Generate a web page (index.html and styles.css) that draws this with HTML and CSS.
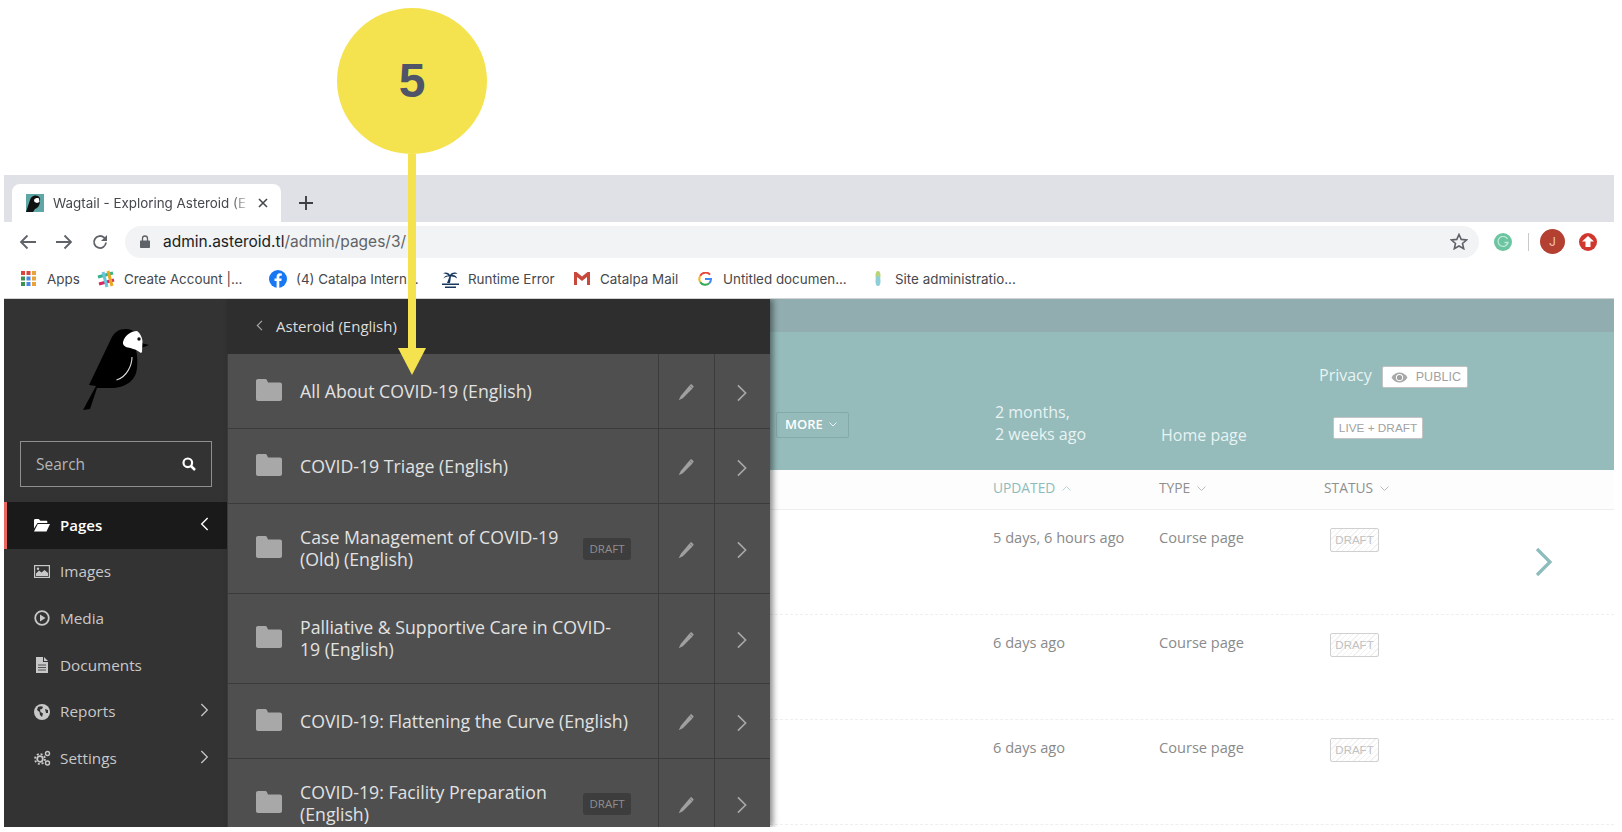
FILE: index.html
```html
<!DOCTYPE html>
<html lang="en">
<head>
  <meta charset="UTF-8" />
  <title>Wagtail - Exploring Asteroid</title>
  <link rel="stylesheet" href="styles.css">
</head>
<body>

  <svg class="defs" width="0" height="0">
    <symbol id="folder" viewBox="0 0 26 22">
      <path d="M2 0h7c1 0 1.600.5 2 1.200L12 3.500h12c1.100 0 2 .9 2 2V20c0 1.100-.9 2-2 2H2c-1.100 0-2-.9-2-2V2C0 .9.900 0 2 0z"/>
    </symbol>
    <symbol id="pencil" viewBox="0 0 16 17">
      <path d="M11.500 1.500l3 3L4.800 14.200.7 16.300l2-4.300z"/>
      <path d="M12.300.7c.5-.5 1.100-.5 1.500-.1l1.500 1.500c.4.400.4 1-.1 1.500l-.6.600-3-3z"/>
    </symbol>
    <symbol id="chev" viewBox="0 0 12 20">
      <path d="M1.500 1.500L10 10l-8.500 8.500" fill="none" stroke="currentColor" stroke-width="1.800"/>
    </symbol>
    <symbol id="chev-left" viewBox="0 0 12 20">
      <path d="M10.500 1.500L2 10l8.500 8.500" fill="none" stroke="currentColor" stroke-width="2"/>
    </symbol>
  </svg>

  <div class="callout">
    <div class="callout-dot">5</div>
    <div class="callout-line"></div>
    <div class="callout-tip"></div>
  </div>

  <div class="shot">

    <div class="tabstrip">
      <div class="tab">
        <svg class="favicon" width="18" height="18" viewBox="0 0 18 18">
          <rect width="18" height="18" fill="#5fa6a6"/>
          <path d="M0 18L4 6c1-4 5-5.500 8-4 2 1 2.500 3 2 5 0 4-2 7-5 8l-2 3z" fill="#111"/>
          <path d="M8 6c1-2 3.500-2.500 5-1.500L13.500 8 11 9 8.500 8z" fill="#fff"/>
        </svg>
        <span class="tab-title">Wagtail - Exploring Asteroid (E</span>
        <svg class="tab-close" width="10" height="10" viewBox="0 0 10 10"><path d="M1 1l8 8M9 1l-8 8" stroke="#45484d" stroke-width="1.600"/></svg>
      </div>
      <svg class="tab-new" width="14" height="14" viewBox="0 0 14 14"><path d="M7 0v14M0 7h14" stroke="#3c4043" stroke-width="1.900"/></svg>
    </div>

    <div class="toolbar">
      <svg class="nav-btn" width="18" height="16" viewBox="0 0 18 16"><path d="M17 8H2M8.500 1.500L2 8l6.500 6.500" fill="none" stroke="#5f6368" stroke-width="1.800"/></svg>
      <svg class="nav-btn" width="18" height="16" viewBox="0 0 18 16"><path d="M1 8h15M9.500 1.500L16 8l-6.500 6.500" fill="none" stroke="#5f6368" stroke-width="1.800"/></svg>
      <svg class="nav-btn" width="18" height="18" viewBox="0 0 18 18"><path d="M15 9.500a6 6 0 1 1-1.800-4.800L15 6.500" fill="none" stroke="#5f6368" stroke-width="1.800"/><path d="M16 2v6h-6z" fill="#5f6368"/></svg>
      <div class="omnibox">
        <svg width="10" height="13" viewBox="0 0 10 13"><path d="M1 5.500h8c.6 0 1 .4 1 1V12c0 .6-.4 1-1 1H1c-.6 0-1-.4-1-1V6.500c0-.6.400-1 1-1z" fill="#5f6368"/><path d="M2.500 6V3.500a2.500 2.500 0 0 1 5 0V6" fill="none" stroke="#5f6368" stroke-width="1.300"/></svg>
        <span class="url"><b>admin.asteroid.tl</b>/admin/pages/3/</span>
        <svg class="star" width="18" height="17" viewBox="0 0 18 17"><path d="M9 1.500l2.200 4.900 5.300.6-4 3.500 1.200 5.200L9 13l-4.700 2.700 1.200-5.200-4-3.500 5.300-.6z" fill="none" stroke="#5f6368" stroke-width="1.600"/></svg>
      </div>
      <div class="ext-grammarly">
        <svg width="12" height="12" viewBox="0 0 12 12"><path d="M10.500 3A5 5 0 1 0 11 6.500H7.500" fill="none" stroke="#bfe9d9" stroke-width="1.300"/></svg>
      </div>
      <div class="ext-sep"></div>
      <div class="avatar">J</div>
      <div class="ext-up">
        <svg width="12" height="11" viewBox="0 0 12 11"><path d="M6 0l6 5.500H8.500V11h-5V5.500H0z" fill="#fff"/></svg>
      </div>
    </div>

    <div class="bookmarks">
      <div class="bm bm-apps">
        <svg width="15" height="15" viewBox="0 0 15 15">
          <rect width="4" height="4" fill="#d9453a"/><rect x="5.500" width="4" height="4" fill="#d9453a"/><rect x="11" width="4" height="4" fill="#e9a33b"/>
          <rect y="5.500" width="4" height="4" fill="#3f8f4d"/><rect x="5.500" y="5.500" width="4" height="4" fill="#4a85e8"/><rect x="11" y="5.500" width="4" height="4" fill="#e9a33b"/>
          <rect y="11" width="4" height="4" fill="#3f8f4d"/><rect x="5.500" y="11" width="4" height="4" fill="#4a85e8"/><rect x="11" y="11" width="4" height="4" fill="#e9a33b"/>
        </svg>
        <span>Apps</span>
      </div>
      <div class="bm bm-slack">
        <svg width="18" height="18" viewBox="0 0 18 18">
          <path d="M1 7l15-4" stroke="#36b38a" stroke-width="3"/><path d="M2 14l15-4" stroke="#d8285f" stroke-width="3"/>
          <path d="M6 2l4 15" stroke="#6ac4dd" stroke-width="3"/><path d="M11 1l4 15" stroke="#e9a820" stroke-width="3"/>
        </svg>
        <span>Create Account |...</span>
      </div>
      <div class="bm bm-fb">
        <svg width="18" height="18" viewBox="0 0 18 18"><circle cx="9" cy="9" r="9" fill="#1877f2"/><path d="M7.600 18v-7H5.500V8.400h2.100V6.700c0-2.200 1.300-3.400 3.300-3.400l1.900.2v2.200h-1.100c-1 0-1.400.7-1.400 1.300v1.400h2.400l-.4 2.600h-2v7z" fill="#fff"/></svg>
        <span>(4) Catalpa Intern...</span>
      </div>
      <div class="bm bm-island">
        <svg width="19" height="18" viewBox="0 0 19 18"><path d="M9 5C7 2 4 2 2 3.500 4 3.500 6 4 7.500 5.500 5 5 3 6.500 2.500 8.500 4.500 6.800 6.500 6.300 8.500 6.500L6 13h3l1-6.500c2-.2 4.500.5 6 2-.3-2.500-2.500-4-5-3.500 1.500-1 3.500-1.500 5.500-1C15 2 11 2 9 5z" fill="#17375e"/><path d="M1 13.500h17v1.500H1zM4 16.500h11V18H4z" fill="#17375e"/></svg>
        <span>Runtime Error</span>
      </div>
      <div class="bm bm-gmail">
        <svg width="16" height="13" viewBox="0 0 16 13"><path d="M0 0h2.500L8 4.500 13.500 0H16v13h-3V5L8 9 3 5v8H0z" fill="#c8493b"/></svg>
        <span>Catalpa Mail</span>
      </div>
      <div class="bm bm-google">
        <svg width="14" height="14" viewBox="0 0 14 14">
          <path d="M12 2.600A6 6 0 0 0 2.200 3.900" fill="none" stroke="#e6483a" stroke-width="2"/>
          <path d="M2.200 3.900a6 6 0 0 0 0 6.200" fill="none" stroke="#f4b81f" stroke-width="2"/>
          <path d="M2.200 10.100a6 6 0 0 0 9.200 1" fill="none" stroke="#33a853" stroke-width="2"/>
          <path d="M11.400 11.100A6 6 0 0 0 13 7H7" fill="none" stroke="#4285f4" stroke-width="2"/>
        </svg>
        <span>Untitled documen...</span>
      </div>
      <div class="bm bm-site">
        <svg width="6" height="15" viewBox="0 0 6 15"><ellipse cx="3" cy="4.500" rx="2.500" ry="4.500" fill="#b8d47a"/><ellipse cx="3" cy="10" rx="2.500" ry="5" fill="#8ccfd8"/></svg>
        <span>Site administratio...</span>
      </div>
    </div>

    <div class="app">

      <aside class="sidebar">
        <svg class="bird" width="90" height="100" viewBox="0 0 90 100">
          <path d="M79 25l-8-2c-2-8-7-14-15-14-7 0-12 3-15 10L19 65l7 1-13 24 7-1 7-21h14c14 0 25-7 26-20 .5-7 .5-12-1-18z" fill="#000"/>
          <path d="M53 22c2-7 8-11 14-11 3 2 5 6 5.500 10l-.5 11-1 1c-5-4-11-5-15-6-2-1-3.500-3-3-5z" fill="#fff"/>
          <circle cx="69" cy="19" r="1.700" fill="#111"/>
          <path d="M62 37c0 8-5 20-15.500 23" fill="none" stroke="#ddd" stroke-width="1.100"/>
        </svg>
        <div class="search">
          <span>Search</span>
          <svg width="14" height="14" viewBox="0 0 14 14"><circle cx="5.800" cy="5.800" r="4.300" fill="none" stroke="#fff" stroke-width="2.200"/><path d="M9 9l4 4" stroke="#fff" stroke-width="2.500"/></svg>
        </div>
        <nav>
          <a class="nav-item active">
            <svg class="nav-icon" width="16" height="13" viewBox="0 0 16 13"><path d="M0 1.500C0 .7.500 0 1.300 0h3.500l1.500 1.800h6c.6 0 1 .4 1 1V4H3.500L0 9.500z" fill="#fff"/><path d="M3.800 5H16l-3.500 7.500H0z" fill="#fff"/></svg>
            <span>Pages</span>
            <svg class="nav-chev" width="9" height="14"><use href="#chev-left"/></svg>
          </a>
          <a class="nav-item">
            <svg class="nav-icon" width="16" height="13" viewBox="0 0 16 13"><rect x=".6" y=".6" width="14.800" height="11.800" fill="none" stroke="#c8c8c8" stroke-width="1.200"/><path d="M2 11V8.500l3-3 2.500 2 3-2.500L14 8v3z" fill="#c8c8c8"/><circle cx="4" cy="3.700" r="1.200" fill="#c8c8c8"/></svg>
            <span>Images</span>
          </a>
          <a class="nav-item">
            <svg class="nav-icon" width="16" height="16" viewBox="0 0 16 16"><circle cx="8" cy="8" r="6.800" fill="none" stroke="#c8c8c8" stroke-width="1.800"/><path d="M6 4.500L11.500 8 6 11.500z" fill="#c8c8c8"/></svg>
            <span>Media</span>
          </a>
          <a class="nav-item">
            <svg class="nav-icon" width="16" height="16" viewBox="0 0 16 16"><path d="M2 0h7v5h5v11H2zM10 0l4 4h-4z" fill="#c8c8c8"/><path d="M4 8h8M4 10.500h8M4 13h8" stroke="#333" stroke-width=".8"/></svg>
            <span>Documents</span>
          </a>
          <a class="nav-item">
            <svg class="nav-icon" width="16" height="16" viewBox="0 0 16 16"><circle cx="8" cy="8" r="8" fill="#c8c8c8"/><path d="M4 3c2-1 4-1 5 0L8 5 6 5.500 6.500 8 9 9.500 8 13 6 11 5.500 8 3 6z" fill="#333"/><path d="M11 5l3 1v3l-2 0z" fill="#333"/></svg>
            <span>Reports</span>
            <svg class="nav-chev" width="9" height="14"><use href="#chev"/></svg>
          </a>
          <a class="nav-item">
            <svg class="nav-icon" width="17" height="16" viewBox="0 0 17 16"><circle cx="6" cy="9" r="2.800" fill="none" stroke="#c8c8c8" stroke-width="1.800"/><circle cx="6" cy="9" r="5" fill="none" stroke="#c8c8c8" stroke-width="1.700" stroke-dasharray="2 1.930"/><circle cx="13.500" cy="3.500" r="2" fill="none" stroke="#c8c8c8" stroke-width="1.400"/><circle cx="13.500" cy="13" r="2" fill="none" stroke="#c8c8c8" stroke-width="1.400"/></svg>
            <span>Settings</span>
            <svg class="nav-chev" width="9" height="14"><use href="#chev"/></svg>
          </a>
        </nav>
      </aside>

      <section class="explorer">
        <div class="explorer-head">
          <svg width="7" height="11"><use href="#chev-left"/></svg>
          <span>Asteroid (English)</span>
        </div>
        <div class="ex-row">
          <div class="ex-title"><svg class="folder"><use href="#folder"/></svg><span class="ex-name">All About COVID-19 (English)</span></div>
          <div class="ex-btn"><svg class="pencil"><use href="#pencil"/></svg></div>
          <div class="ex-btn"><svg class="ex-chev"><use href="#chev"/></svg></div>
        </div>
        <div class="ex-row">
          <div class="ex-title"><svg class="folder"><use href="#folder"/></svg><span class="ex-name">COVID-19 Triage (English)</span></div>
          <div class="ex-btn"><svg class="pencil"><use href="#pencil"/></svg></div>
          <div class="ex-btn"><svg class="ex-chev"><use href="#chev"/></svg></div>
        </div>
        <div class="ex-row ex-row-tall">
          <div class="ex-title"><svg class="folder"><use href="#folder"/></svg><span class="ex-name">Case Management of COVID-19<br>(Old) (English)</span><span class="ex-draft">DRAFT</span></div>
          <div class="ex-btn"><svg class="pencil"><use href="#pencil"/></svg></div>
          <div class="ex-btn"><svg class="ex-chev"><use href="#chev"/></svg></div>
        </div>
        <div class="ex-row ex-row-tall">
          <div class="ex-title"><svg class="folder"><use href="#folder"/></svg><span class="ex-name">Palliative &amp; Supportive Care in COVID-<br>19 (English)</span></div>
          <div class="ex-btn"><svg class="pencil"><use href="#pencil"/></svg></div>
          <div class="ex-btn"><svg class="ex-chev"><use href="#chev"/></svg></div>
        </div>
        <div class="ex-row">
          <div class="ex-title"><svg class="folder"><use href="#folder"/></svg><span class="ex-name">COVID-19: Flattening the Curve (English)</span></div>
          <div class="ex-btn"><svg class="pencil"><use href="#pencil"/></svg></div>
          <div class="ex-btn"><svg class="ex-chev"><use href="#chev"/></svg></div>
        </div>
        <div class="ex-row ex-row-tall">
          <div class="ex-title"><svg class="folder"><use href="#folder"/></svg><span class="ex-name">COVID-19: Facility Preparation<br>(English)</span><span class="ex-draft">DRAFT</span></div>
          <div class="ex-btn"><svg class="pencil"><use href="#pencil"/></svg></div>
          <div class="ex-btn"><svg class="ex-chev"><use href="#chev"/></svg></div>
        </div>
      </section>

      <main class="content">
        <div class="topbar"></div>
        <div class="page-head">
          <div class="privacy">
            <span class="privacy-label">Privacy</span>
            <span class="tag tag-public">
              <svg width="17" height="11" viewBox="0 0 17 11"><path d="M.5 5.500C2.500 2 5.300.5 8.500.5s6 1.500 8 5c-2 3.500-4.800 5-8 5s-6-1.500-8-5z" fill="#a9a9a9"/><circle cx="8.500" cy="5.500" r="3.600" fill="#fff"/><circle cx="8.500" cy="5.500" r="2.600" fill="#a0a0a0"/></svg>
              PUBLIC
            </span>
          </div>
          <div class="summary">
            <div class="more">MORE <svg width="8" height="5" viewBox="0 0 8 5"><path d="M.5.500L4 4 7.500.5" fill="none" stroke="#e8f2f2" stroke-width="1"/></svg></div>
            <div class="sum-date">2 months,<br>2 weeks ago</div>
            <div class="sum-type">Home page</div>
            <div class="tag tag-live">LIVE + DRAFT</div>
          </div>
        </div>
        <div class="col-head">
          <span class="col col-on">UPDATED <svg width="9" height="5" viewBox="0 0 9 5"><path d="M.5 4.500L4.500.5l4 4" fill="none" stroke="#b5d5d5"/></svg></span>
          <span class="col">TYPE <svg width="9" height="5" viewBox="0 0 9 5"><path d="M.5.500l4 4 4-4" fill="none" stroke="#bbb"/></svg></span>
          <span class="col">STATUS <svg width="9" height="5" viewBox="0 0 9 5"><path d="M.5.500l4 4 4-4" fill="none" stroke="#bbb"/></svg></span>
        </div>
        <div class="row">
          <span>5 days, 6 hours ago</span>
          <span>Course page</span>
          <span class="row-draft">DRAFT</span>
          <svg class="row-chev" width="18" height="30" viewBox="0 0 18 30"><path d="M2 2l13 13L2 28" fill="none" stroke="#8dbcbc" stroke-width="3.200"/></svg>
        </div>
        <div class="row">
          <span>6 days ago</span>
          <span>Course page</span>
          <span class="row-draft">DRAFT</span>
        </div>
        <div class="row">
          <span>6 days ago</span>
          <span>Course page</span>
          <span class="row-draft">DRAFT</span>
        </div>
      </main>

    </div>
  </div>

</body>
</html>
```

FILE: styles.css
```css
* {
  box-sizing: border-box;
}

html,
body {
  margin: 0;
  height: 832px;
  overflow: hidden;
  background: white;
}

body {
  font-family: "Open Sans", sans-serif;
  position: relative;
}

.defs {
  position: absolute;
}

/* yellow callout */
.callout {
  position: absolute;
  left: 337px;
  top: 8px;
  width: 150px;
  z-index: 5;
}

.callout-dot {
  width: 150px;
  height: 146px;
  border-radius: 50%;
  background: #f5e24f;
  color: #4f5468;
  font-family: "Liberation Sans", Arial, sans-serif;
  font-weight: bold;
  font-size: 48px;
  line-height: 146px;
  text-align: center;
}

.callout-line {
  width: 8px;
  height: 194px;
  margin-left: 71px;
  background: #f5e24f;
}

.callout-tip {
  width: 0;
  height: 0;
  margin-left: 61px;
  border-left: 14px solid transparent;
  border-right: 14px solid transparent;
  border-top: 27px solid #f5e24f;
}

/* browser */
.shot {
  margin: 175px 8px 0 4px;
  font-family: Inter, sans-serif;
}

.tabstrip {
  height: 47px;
  background: #dfe1e6;
  display: flex;
  align-items: flex-end;
  padding-left: 8px;
}

.tab {
  width: 269px;
  height: 38px;
  background: white;
  border-radius: 8px 8px 0 0;
  display: flex;
  align-items: center;
  padding-left: 14px;
  font-size: 13.4px;
  color: #45484d;
}

.favicon {
  flex: none;
  margin-right: 9px;
}

.tab-title {
  width: 196px;
  white-space: nowrap;
  -webkit-mask-image: linear-gradient(to right, black 178px, transparent 198px);
  mask-image: linear-gradient(to right, black 178px, transparent 198px);
}

.tab-close {
  margin-left: 9px;
}

.tab-new {
  margin: 0 0 12px 18px;
}

.toolbar {
  height: 37px;
  background: white;
  display: flex;
  align-items: center;
  padding: 2px 0 0 15px;
}

.nav-btn {
  margin-right: 18px;
}

.omnibox {
  width: 1354px;
  height: 32px;
  margin-left: -2px;
  background: #f1f3f4;
  border-radius: 16px;
  display: flex;
  align-items: center;
  padding: 0 11px 0 15px;
  font-size: 15.5px;
  color: #5f6368;
}

.omnibox .url {
  margin-left: 13px;
  flex: 1;
}

.omnibox .url b {
  font-weight: normal;
  color: #202124;
}

.ext-grammarly {
  width: 18px;
  height: 18px;
  margin-left: 15px;
  border-radius: 50%;
  background: #6cc5a1;
  display: flex;
  align-items: center;
  justify-content: center;
}

.ext-sep {
  width: 1px;
  height: 18px;
  margin-left: 16px;
  background: #c8cacc;
}

.avatar {
  width: 25px;
  height: 25px;
  margin-left: 11px;
  border-radius: 50%;
  background: #b34030;
  color: #f2c7c0;
  font-size: 12px;
  line-height: 25px;
  text-align: center;
}

.ext-up {
  width: 18px;
  height: 18px;
  margin-left: 14px;
  border-radius: 50%;
  background: #d0382f;
  display: flex;
  align-items: center;
  justify-content: center;
}

.bookmarks {
  height: 40px;
  background: white;
  border-bottom: 1px solid #d0d2d4;
  display: flex;
  align-items: center;
  font-size: 13.4px;
  color: #45484d;
}

.bm {
  display: flex;
  align-items: center;
  white-space: nowrap;
}

.bm-apps { margin-left: 17px; width: 76px; gap: 11px; }
.bm-slack { width: 172px; gap: 9px; }
.bm-fb { width: 172px; gap: 9px; }
.bm-island { width: 133px; gap: 8px; }
.bm-gmail { width: 124px; gap: 10px; }
.bm-google { width: 177px; gap: 11px; }
.bm-site { gap: 14px; }

/* wagtail admin */
.app {
  display: flex;
  height: 528px;
  overflow: hidden;
  font-family: "Open Sans", sans-serif;
}

.sidebar {
  flex: none;
  width: 223px;
  background: #333;
}

.bird {
  display: block;
  margin: 21px 0 21px 66px;
}

.search {
  width: 192px;
  height: 46px;
  margin: 0 0 15px 16px;
  border: 1px solid #8f8f8f;
  display: flex;
  align-items: center;
  justify-content: space-between;
  padding: 0 15px;
  font-size: 15.5px;
  color: #b5b5b5;
}

.nav-item {
  height: 46.6px;
  display: flex;
  align-items: center;
  padding-left: 30px;
  font-size: 15.3px;
  color: #c8c8c8;
  position: relative;
}

.nav-item span {
  position: absolute;
  left: 56px;
  margin-top: -1px;
}

.nav-item.active {
  background: #1a1a1a;
  border-left: 3px solid #e9655f;
  padding-left: 27px;
  color: white;
  font-size: 15px;
  font-weight: 600;
}

.nav-item.active span {
  left: 53px;
}

.nav-chev {
  position: absolute;
  right: 18px;
  top: 15px;
  color: #c8c8c8;
}

.nav-item.active .nav-chev {
  color: white;
}

.explorer {
  flex: none;
  width: 543px;
  background: #4f4f4f;
  box-shadow: 3px 0 6px rgba(0, 0, 0, 0.45);
  border-left: 1px solid #3a3a3a;
  position: relative;
  z-index: 2;
}

.explorer-head {
  height: 55px;
  background: #2e2e2e;
  display: flex;
  align-items: center;
  padding: 0 0 2px 29px;
  gap: 13px;
  font-size: 15px;
  color: #dcdcdc;
  margin-left: -1px;
}

.explorer-head svg {
  color: #aaa;
}

.ex-row {
  height: 75px;
  display: flex;
  border-bottom: 1px solid #3b3b3b;
}

.ex-row-tall {
  height: 90px;
}

.ex-title {
  flex: 1;
  display: flex;
  align-items: center;
  padding: 0 27px 0 28px;
  font-size: 17.7px;
  line-height: 22px;
  color: #e2e2e2;
}

.folder {
  flex: none;
  width: 26px;
  height: 22px;
  margin: 0 18px 3px 0;
  fill: #a8a8a8;
}

.ex-name {
  flex: 1;
  margin-bottom: 1px;
  white-space: nowrap;
}

.ex-draft {
  flex: none;
  width: 48px;
  height: 22px;
  background: #3d3d3d;
  border-radius: 3px;
  color: #8f8f8f;
  font-size: 11.500px;
  line-height: 22px;
  text-align: center;
}

.ex-btn {
  flex: none;
  width: 56px;
  border-left: 1px solid #3b3b3b;
  display: flex;
  align-items: center;
  justify-content: center;
  padding: 3px 2px 0 0;
}

.pencil {
  width: 16px;
  height: 17px;
  fill: #a0a0a0;
}

.ex-chev {
  width: 12px;
  height: 18px;
  color: #a8a8a8;
}

.content {
  flex: 1;
  background: white;
  color: #8a8a8a;
  font-size: 14.600px;
}

.topbar {
  height: 33px;
  background: #91adaf;
}

.page-head {
  height: 138px;
  background: #95bbbb;
  padding-top: 34px;
  color: #e8f3f3;
  font-size: 16px;
}

.privacy {
  display: flex;
  align-items: center;
  gap: 10px;
  height: 22px;
  padding-left: 549px;
}

.privacy-label {
  margin-bottom: 4px;
}

.tag {
  height: 22px;
  background: white;
  border: 1px solid #c4c4c4;
  border-radius: 2px;
  color: #a2a2a2;
  font-family: "Liberation Sans", Arial, sans-serif;
  font-size: 12.500px;
  line-height: 20px;
}

.tag-public {
  width: 86px;
  display: flex;
  align-items: center;
  gap: 8px;
  padding-left: 8px;
}

.tag-live {
  width: 90px;
  margin-top: 16px;
  font-size: 11.800px;
  text-align: center;
}

.summary {
  display: grid;
  grid-template-columns: 219px 166px 172px 1fr;
  margin-top: 13px;
  padding-left: 6px;
  line-height: 22px;
  align-items: start;
}

.more {
  width: 73px;
  height: 26px;
  margin-top: 11px;
  border: 1px solid #84a9a9;
  border-radius: 2px;
  color: white;
  font-weight: 600;
  font-size: 13px;
  line-height: 22px;
  padding-left: 8px;
  white-space: nowrap;
}

.more svg {
  margin: 0 0 2px 3px;
}

.sum-type {
  margin-top: 23px;
}

.col-head,
.row {
  display: grid;
  grid-template-columns: 166px 165px 211px 1fr;
  padding-left: 223px;
}

.col-head {
  height: 40px;
  background: #fdfdfd;
  border-bottom: 1px solid #eee;
  align-items: center;
  padding-bottom: 5px;
  font-size: 13.800px;
  color: #8f8f8f;
}

.col svg {
  margin: 0 0 2px 3px;
}

.col-on {
  color: #8dbcbc;
}

.row {
  height: 105px;
  padding-top: 16px;
  border-bottom: 1px dashed #efefef;
  line-height: 22px;
  align-items: start;
}

.row-draft {
  width: 49px;
  height: 24px;
  margin: 2px 0 0 6px;
  border: 1px solid #d0d0d0;
  border-radius: 2px;
  background: repeating-linear-gradient(135deg, #fff, #fff 3px, #f1f1f1 3px, #f1f1f1 4px);
  color: #c2c2c2;
  font-family: "Liberation Sans", Arial, sans-serif;
  font-size: 11.500px;
  text-align: center;
}

.row-chev {
  margin-top: 21px;
}
```
